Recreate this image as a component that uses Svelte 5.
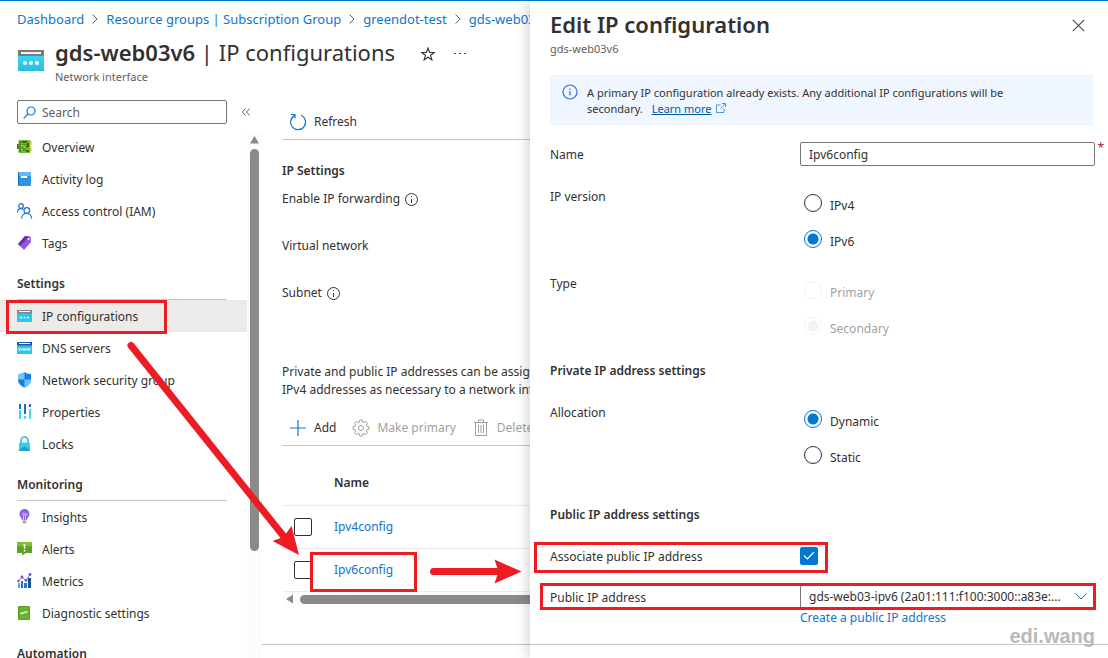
<script>
  let ipVersion = $state('IPv6');
  let kind = $state('Secondary');
  let allocation = $state('Dynamic');
  let associate = $state(true);
  let name = $state('Ipv6config');

  const crumbs = ['Dashboard', 'Resource groups | Subscription Group', 'greendot-test', 'gds-web03v6'];
  const groups = [
    { title: '', items: [['Overview', 'overview'], ['Activity log', 'log'], ['Access control (IAM)', 'iam'], ['Tags', 'tag']] },
    { title: 'Settings', items: [['IP configurations', 'ip'], ['DNS servers', 'dns'], ['Network security group', 'shield'], ['Properties', 'props'], ['Locks', 'lock']] },
    { title: 'Monitoring', items: [['Insights', 'bulb'], ['Alerts', 'alert'], ['Metrics', 'metrics'], ['Diagnostic settings', 'diag']] },
    { title: 'Automation', items: [] }
  ];
  const configs = ['Ipv4config', 'Ipv6config'];
</script>

{#snippet navIcon(id)}
  <svg class="nav-icon" viewBox="0 0 16 16" width="16" height="16" aria-hidden="true">
    {#if id === 'overview'}
      <path fill="#555" d="M0 5h2v5H0z" /><rect x="1.500" y="1" width="12" height="13" rx="1" fill="#76bc2d" />
      <path fill="#2f6b12" d="M5 2h5v2H5zM10 4h2v4h-2zM9 11h3v2H9z" /><path fill="#4d9420" d="M2 2h2v11H2zM5 5h5v7H5z" /><path fill="#c9f08a" d="M5 6h1.500v1H5zM8 6h1v1H8zM6.500 7.500H8V9H6.500zM5 10h1v1H5zM8.500 9.500h1v1h-1z" />
      <path fill="#ffd23c" d="M13 2h2v4h-2zM13 8h2v4h-2z" />
    {:else if id === 'log'}
      <rect x="1" y="1" width="3" height="14" rx="1" fill="#1066b5" /><rect x="2" y="1" width="12" height="14" rx="1" fill="#2f93e3" />
      <path fill="#64b7f3" d="M2 1h12v4H2z" /><rect x="4" y="5" width="6" height="2" fill="#fff" />
    {:else if id === 'iam'}
      <g fill="none" stroke="#1b6ed2" stroke-width="1.200"><circle cx="4" cy="3" r="2.300" /><path d="M.6 9.500C.6 7 2 5.700 4 5.700c1.200 0 2 .4 2.600 1" /><circle cx="9.800" cy="7.500" r="2.800" /><path d="M4.600 15.500c.2-3 2.200-5 5.100-5s4.800 2 5 5" /></g>
    {:else if id === 'tag'}
      <path fill="#8f57d8" d="M8 1l5.500.5L14 7l-7 8-6-6z" /><path fill="#6a2fb5" d="M8 1L1 9l2 2L12 2z" /><circle cx="11.500" cy="4" r="1" fill="#fff" />
    {:else if id === 'ip' || id === 'dns'}
      <rect x="0" y="2" width="15" height="12" rx=".5" fill="#2fc6e8" /><path d="M0 2h15v3.500H0z" fill={id === 'ip' ? '#858585' : '#125ea8'} />
      <path fill="#fff" d="M2 3h11v1H2z" />
      {#if id === 'ip'}<circle cx="4" cy="9.500" r="1" fill="#fff" /><circle cx="7.500" cy="9.500" r="1" fill="#fff" /><circle cx="11" cy="9.500" r="1" fill="#fff" />
      {:else}<path fill="none" stroke="#fff" stroke-width=".8" d="M1.500 8l1 2.500 1-2 1 2 1-2.500M6 8l.8 2.500.8-2 .8 2 .8-2.500M9.800 8l.9 2.500.9-2 .9 2 .9-2.500" />{/if}
    {:else if id === 'shield'}
      <path fill="#1a7fdb" d="M7.500 0c2 1.500 4 2 6.500 2v5.500c0 4-3 6.500-6.500 8C4 14 1 11.500 1 7.500V2c2.500 0 4.500-.5 6.500-2z" />
      <path fill="#6cc6fb" d="M7.500 0v7.500H1V2c2.500 0 4.500-.5 6.500-2zM7.500 7.500H14c0 4-3 6.500-6.500 8z" />
    {:else if id === 'props'}
      <path fill="#1570c4" d="M2 0h2v5H2zM7 0h2v10H7zM12 0h2v3h-2z" /><path fill="#4fd0ee" d="M2 6h2v9H2zM7 12h2v3H7zM12 5h2v10h-2z" />
    {:else if id === 'lock'}
      <path fill="none" stroke="#2cb9dc" stroke-width="1.600" d="M4 7V4.500a3.500 3.500 0 017 0V7" /><rect x="2" y="6.500" width="11" height="8.500" rx="1" fill="#3ccbea" /><path fill="#1fa3cf" d="M2 14l5.500-4 5.500 4v1H2z" />
    {:else if id === 'bulb'}
      <path fill="#8c5ce6" d="M7.500 0a5 5 0 015 5c0 2.600-2.300 3.600-2.500 6H5c-.2-2.400-2.500-3.400-2.500-6a5 5 0 015-5z" />
      <path fill="none" stroke="#dccbff" stroke-width=".9" d="M6.500 11V6M8.500 11V6M6.500 6a1 1 0 10-1-1c0 .6.500 1 1 1h2a1 1 0 10 0-1.500" /><path fill="#a5a5a5" d="M5.500 11.500h4V13l-1 1.500h-2l-1-1.500z" />
    {:else if id === 'alert'}
      <path fill="#5ea324" d="M0 1h15v11H9l-4 2.500V12H0z" /><path fill="#7cc436" d="M0 1h15v4H0z" /><path fill="#fff" d="M6.500 3h2l-.4 5H7zM6.800 9h1.500v1.500H6.800z" />
    {:else if id === 'metrics'}
      <path fill="#5ca8ea" d="M1 10h2v5H1z" /><path fill="#1a78ce" d="M4 8h2v7H4zM7 10h3v5H7z" /><path fill="#135590" d="M11 5h3v10h-3z" />
      <path fill="none" stroke="#9a62e8" stroke-width="1" d="M1.500 8l3.500-4 4 3.500L13 1.500" /><g fill="#8146d8"><circle cx="1.500" cy="8" r="1.200" /><circle cx="5" cy="4" r="1.400" /><circle cx="9" cy="7.300" r="1.400" /><circle cx="13" cy="1.500" r="1.400" /></g>
    {:else}
      <rect x="1" y="1" width="12" height="14" rx="1" fill="#5a9f24" /><rect x="2.500" y="2" width="9.500" height="12" fill="#6cb42e" /><path fill="none" stroke="#fff" stroke-width="1" d="M3 9l2.500-1.500v1.500L8 6.500V8l2.500-1.500" />
    {/if}
  </svg>
{/snippet}

{#snippet info()}
  <svg class="info-icon" width="13" height="13" viewBox="0 0 13 13" aria-hidden="true"><circle cx="6.500" cy="6.500" r="6" fill="none" stroke="#323130" /><path stroke="#323130" d="M6.500 6v4M6.500 3v1" /></svg>
{/snippet}

<div class="portal">
  <main class="blade">
    <nav class="crumbs" aria-label="Breadcrumb">
      {#each crumbs as crumb, i}
        {#if i}<svg width="6" height="10" viewBox="0 0 6 10" aria-hidden="true"><path d="M.5.5L5 5 .5 9.500" fill="none" stroke="#605e5c" /></svg>{/if}
        <a href="#top">{crumb}</a>
      {/each}
    </nav>

    <header class="title">
      <svg width="28" height="22" viewBox="0 0 28 22" aria-hidden="true">
        <defs><linearGradient id="sky" x2="0" y2="1"><stop stop-color="#35d8f5" /><stop offset="1" stop-color="#2cb9e0" /></linearGradient></defs>
        <path fill="url(#sky)" d="M1 6h26v15H1z" /><path fill="#7b7b7b" d="M1 0h26v6H1z" /><path fill="#f2f2f2" d="M4 2h20v2H4z" />
        <g fill="#fff"><circle cx="8" cy="13" r="2" /><circle cx="14" cy="13" r="2" /><circle cx="20" cy="13" r="2" /></g>
      </svg>
      <div>
        <h1><b>gds-web03v6</b> | IP configurations</h1>
        <p>Network interface</p>
      </div>
      <button class="icon-btn" aria-label="Favorite"><svg width="14" height="14" viewBox="0 0 14 14"><path d="M7 1l1.600 4.400 4.700.1-3.800 2.800 1.400 4.600L7 10.200l-3.900 2.700 1.400-4.600L.7 5.500l4.700-.1z" fill="none" stroke="#323130" stroke-width="1.100" /></svg></button>
      <button class="icon-btn" aria-label="More"><svg width="12" height="14" viewBox="0 0 12 14"><path fill="#484644" d="M0 6h2v1H0zM5 6h2v1H5zM10 6h2v1h-2z" /></svg></button>
    </header>

    <div class="body">
      <aside>
        <div class="search-row">
          <label class="search">
            <svg width="13" height="13" viewBox="0 0 13 13" aria-hidden="true"><g fill="none" stroke="#1575cf" stroke-width="1.200"><circle cx="8" cy="5" r="4" /><path d="M5 8L.7 12.300" /></g></svg>
            <input type="search" placeholder="Search" aria-label="Search" />
          </label>
          <button class="icon-btn" aria-label="Collapse menu"><svg width="8" height="8" viewBox="0 0 8 8"><path d="M3.500.5L.5 4l3 3.500M7.500.5l-3 3.500 3 3.500" fill="none" stroke="#605e5c" /></svg></button>
        </div>
        <div class="menu">
          <nav aria-label="Resource menu">
            {#each groups as group}
              {#if group.title}<h2>{group.title}</h2>{/if}
              {#each group.items as [label, icon]}
                <a class="item" class:selected={icon === 'ip'} href="#{icon}">
                  {@render navIcon(icon)}<span>{label}</span>
                  {#if icon === 'ip'}<i class="mark nav-mark"></i>{/if}
                </a>
              {/each}
            {/each}
          </nav>
          <div class="vbar" aria-hidden="true"><svg width="9" height="8" viewBox="0 0 9 8"><path d="M4.500 0L9 7.500H0z" fill="#8a8a8a" /></svg><div class="thumb"></div></div>
        </div>
      </aside>

      <section class="content">
        <div class="inner">
          <div class="toolbar refresh">
            <button><svg width="18" height="18" viewBox="0 0 18 18" aria-hidden="true"><path d="M12 2.300a7.500 7.500 0 11-6.500.3M2 1.500h4v4" fill="none" stroke="#1575cf" stroke-width="1.200" /></svg>Refresh</button>
          </div>
          <h3>IP Settings</h3>
          <div class="prop first">Enable IP forwarding {@render info()}</div>
          <div class="prop">Virtual network</div>
          <div class="prop">Subnet {@render info()}</div>
          <p class="desc">Private and public IP addresses can be assigned<br />IPv4 addresses as necessary to a network interface</p>
          <div class="toolbar">
            <button><svg width="18" height="18" viewBox="0 0 18 18" aria-hidden="true"><path d="M9 1v16M1 9h16" stroke="#1575cf" stroke-width="1.200" /></svg>Add</button>
            <button disabled><svg width="18" height="18" viewBox="0 0 18 18" aria-hidden="true"><g fill="none" stroke="#a19f9d"><path d="M7.700 1h2.600l.4 2 1.300.6L13.700 2.500l1.800 1.800-1.100 1.700.6 1.300 2 .4v2.600l-2 .4-.6 1.300 1.100 1.700-1.800 1.800-1.700-1.100-1.300.6-.4 2H7.700l-.4-2-1.300-.6-1.700 1.100-1.800-1.800L3.600 12 3 10.700l-2-.4V7.700l2-.4L3.600 6 2.500 4.300l1.800-1.800L6 3.600 7.300 3z" /><circle cx="9" cy="9" r="2.500" /></g></svg>Make primary</button>
            <button disabled><svg width="18" height="18" viewBox="0 0 18 18" aria-hidden="true"><path d="M2 3.500h14M6.500 3V1h5v2M3.500 3.500v13h11v-13M6.500 6v8M9 6v8M11.500 6v8" fill="none" stroke="#a19f9d" /></svg>Delete</button>
          </div>
          <table>
            <thead><tr><th class="tick"></th><th>Name</th></tr></thead>
            <tbody>
              {#each configs as config}
                <tr>
                  <td class="tick"><input type="checkbox" aria-label="Select {config}" /></td>
                  <td><a href="#{config}">{config}</a>{#if config === 'Ipv6config'}<i class="mark row-mark"></i>{/if}</td>
                </tr>
              {/each}
            </tbody>
          </table>
          <div class="hbar" aria-hidden="true"><svg width="8" height="10" viewBox="0 0 8 10"><path d="M0 5l7-4.500v9z" fill="#8a8a8a" /></svg><div class="thumb"></div></div>
        </div>
        <footer></footer>
      </section>
    </div>

    <svg class="arrows" width="530" height="657" viewBox="0 1 530 657" aria-hidden="true">
      <g stroke="#ed1c24" stroke-width="7" stroke-linecap="round"><path d="M131 345.500L285 538" /><path d="M433.500 571.500H498" /></g>
      <path fill="#ed1c24" d="M299 555l-26.500-14 11-4 8-11zM521.500 571.500l-27 12 4-12-4-12z" />
    </svg>
  </main>

  <section class="panel" aria-label="Edit IP configuration">
    <header>
      <div><h2>Edit IP configuration</h2><p>gds-web03v6</p></div>
      <button class="icon-btn" aria-label="Close"><svg width="13" height="13" viewBox="0 0 13 13"><path d="M.8.8l11.400 11.400M12.200.8L.8 12.200" stroke="#484644" stroke-width="1.100" /></svg></button>
    </header>
    <div class="notice">
      <svg width="16" height="16" viewBox="0 0 16 16" aria-hidden="true"><circle cx="8" cy="8" r="7" fill="none" stroke="#2b6cf0" stroke-width="1.200" /><path stroke="#2b6cf0" stroke-width="1.200" d="M8 7v4.500M8 4.500V6" /></svg>
      <p>A primary IP configuration already exists. Any additional IP configurations will be<br />secondary. <a href="#learn">Learn more</a><svg width="10" height="10" viewBox="0 0 10 10" aria-hidden="true"><path d="M4.500 2H.5v7.500H8V5.500M6 .5h3.500V4M9.500.5L4.500 5.500" fill="none" stroke="#4a9be0" /></svg></p>
    </div>
    <form>
      <div class="row"><label for="cfg">Name</label><div class="field"><input id="cfg" class="text" bind:value={name} required /><span class="star">*</span></div></div>
      <div class="row version" role="radiogroup" aria-labelledby="ver"><span id="ver">IP version</span>
        <div class="radios">
          {#each ['IPv4', 'IPv6'] as v}<label><input type="radio" name="version" value={v} bind:group={ipVersion} /><span>{v}</span></label>{/each}
        </div>
      </div>
      <div class="row kind" role="radiogroup" aria-labelledby="kind"><span id="kind">Type</span>
        <div class="radios">
          {#each ['Primary', 'Secondary'] as v}<label class="off"><input type="radio" name="kind" value={v} bind:group={kind} disabled /><span>{v}</span></label>{/each}
        </div>
      </div>
      <h3 class="private">Private IP address settings</h3>
      <div class="row alloc" role="radiogroup" aria-labelledby="alloc"><span id="alloc">Allocation</span>
        <div class="radios">
          {#each ['Dynamic', 'Static'] as v}<label><input type="radio" name="alloc" value={v} bind:group={allocation} /><span>{v}</span></label>{/each}
        </div>
      </div>
      <h3 class="public">Public IP address settings</h3>
      <div class="row assoc"><label for="assoc">Associate public IP address</label>
        <div class="check"><input id="assoc" type="checkbox" bind:checked={associate} /><svg width="12" height="9" viewBox="0 0 12 9" aria-hidden="true"><path d="M1 4.500l3.300 3.300L11 1" fill="none" stroke="#fff" stroke-width="1.200" /></svg></div>
        <i class="mark assoc-mark"></i>
      </div>
      <div class="row pip"><label for="pip">Public IP address</label>
        <div class="field"><select id="pip"><option>gds-web03-ipv6 (2a01:111:f100:3000::a83e:...</option></select><svg class="chev" width="12" height="7" viewBox="0 0 12 7" aria-hidden="true"><path d="M.5.5L6 6l5.500-5.500" fill="none" stroke="#1f6fb8" /></svg></div>
        <i class="mark pip-mark"></i>
      </div>
      <div class="row"><a class="create" href="#create">Create a public IP address</a></div>
    </form>
    <footer><span>edi.wang</span></footer>
  </section>
</div>

<style>
  :global(body) { margin: 0; background: #fff; }
  .portal {
    display: grid; grid-template-columns: minmax(0, 530fr) minmax(0, 578fr);
    height: 100vh; box-sizing: border-box; border-top: 1px solid #0078d4; overflow: hidden;
    font: 12px/20px "Noto Sans", "Open Sans", sans-serif; color: #323130;
  }
  .portal * { box-sizing: border-box; }
  h1, h2, h3, p { margin: 0; font-weight: 400; }
  h2, h3, th { font-size: 12px; font-weight: 600; }
  a { color: #0f74cd; text-decoration: none; }
  button, input, select { font: inherit; color: inherit; }
  button { border: 0; background: none; padding: 0; }
  svg { flex: none; display: block; }
  .icon-btn { display: flex; }
  .mark { position: absolute; border: 3px solid #ed1c24; pointer-events: none; }

  .blade { position: relative; display: flex; flex-direction: column; min-width: 0; overflow: hidden; white-space: nowrap; }
  .crumbs { display: flex; align-items: center; gap: 8px; padding: 8px 0 0 17px; font-size: 13px; }
  .title { display: flex; padding: 6px 0 0 17px; height: 71px; }
  .title > svg { margin-top: 15px; }
  .title > div { margin: 0 26px 0 10px; }
  h1 { font-size: 22px; line-height: 34px; }
  h1 b { font-weight: 600; }
  .title p, .panel header p { font-size: 11px; line-height: 14px; color: #605e5c; }
  .title p { margin-top: 1px; }
  .title .icon-btn { margin: 12px 19px 0 0; height: 14px; }
  .body { display: flex; flex: 1; min-height: 0; }
  aside { width: 262px; flex: none; display: flex; flex-direction: column; }
  .search-row { display: flex; align-items: center; gap: 15px; padding-left: 17px; height: 24px; margin-bottom: 7px; }
  .search { display: flex; align-items: center; gap: 6px; width: 210px; height: 24px; padding-left: 5px; border: 1px solid #797775; border-radius: 2px; }
  .search input { flex: 1; min-width: 0; border: 0; outline: 0; padding: 1px 0 0; background: none; }
  .search input::placeholder { color: #605e5c; opacity: 1; }
  .menu { display: flex; flex: 1; min-height: 0; }
  .menu nav { flex: 1; overflow: hidden; }
  .menu h2 { height: 41px; padding-top: 15px; margin: 0 20px 0 17px; border-bottom: 1px solid #c8c6c4; }
  .item { position: relative; display: flex; align-items: center; gap: 9px; height: 32px; padding: 2px 0 0 17px; color: #323130; }
  .selected { background: #edebe9; }
  .nav-icon { margin-top: -2px; }
  .nav-mark { left: 6px; top: 0; width: 161px; height: 34px; z-index: 1; }
  .vbar { width: 15px; background: #fcfcfc; padding: 5px 3px 0; }
  .vbar .thumb { width: 9px; height: 402px; margin-top: 5px; border-radius: 5px; background: #8a8a8a; }

  .content { flex: 1; min-width: 0; display: flex; flex-direction: column; }
  .inner { padding-left: 20px; }
  .toolbar { display: flex; align-items: center; gap: 16px; height: 36px; padding-left: 7px; border-bottom: 1px solid #c8c6c4; }
  .toolbar button { display: flex; align-items: center; gap: 7px; }
  .toolbar button:disabled { color: #a19f9d; }
  .refresh { height: 40px; padding-top: 4px; }
  .inner h3 { margin-top: 21px; }
  .prop { display: flex; align-items: center; gap: 5px; height: 20px; margin-top: 27px; }
  .first { margin-top: 8px; }
  .desc { margin: 60px 0 11px; line-height: 18px; }
  table { width: 100%; border-collapse: collapse; }
  th, td { position: relative; height: 43px; padding: 0; text-align: left; border-bottom: 1px solid #edebe9; }
  th { height: 59px; padding-top: 16px; }
  .tick { width: 52px; padding-left: 12px; }
  input[type='checkbox'] { appearance: none; display: block; width: 18px; height: 18px; margin: 0; border: 1px solid #323130; border-radius: 2px; }
  .row-mark { left: -24px; top: 3px; width: 107px; height: 40px; }
  .hbar { display: flex; align-items: center; gap: 6px; height: 15px; padding-left: 4px; background: #fcfcfc; }
  .hbar .thumb { flex: 1; height: 9px; border-radius: 5px 0 0 5px; background: #8a8a8a; }
  footer { height: 14px; margin-top: auto; flex: none; border-top: 1px solid #c8c6c4; }
  .arrows { position: absolute; left: 0; top: 0; pointer-events: none; }

  .panel { position: relative; display: flex; flex-direction: column; background: #fff; box-shadow: 0 0 14px rgba(0, 0, 0, 0.24); }
  .panel header { display: flex; justify-content: space-between; height: 74px; padding: 6px 23px 0 20px; }
  .panel header h2 { font-size: 22px; line-height: 34px; }
  .panel header .icon-btn { margin-top: 12px; height: 13px; }
  .panel header p { margin-top: 1px; }
  .notice { display: flex; gap: 9px; height: 50px; margin: 0 15px 0 20px; padding: 9px 12px; background: #eff6ff; font-size: 11px; line-height: 16px; }
  .notice a { margin: 0 5px 0 6px; color: #005a9e; text-decoration: underline; }
  .notice p { padding-top: 1px; }
  .notice p svg { display: inline-block; }
  form { padding: 17px 13px 0 20px; }
  .row { position: relative; display: grid; grid-template-columns: 250px minmax(0, 1fr); }
  .field { position: relative; height: 24px; }
  .row > label, .row > span { padding-top: 1px; align-self: start; }
  .row > label[for='cfg'], .row > label[for='pip'] { align-self: center; }
  form h3 { padding-top: 1px; height: 20px; }
  .text, select { display: block; width: 100%; height: 24px; padding: 0 8px; border: 1px solid #797775; border-radius: 2px; background: #fff; outline: 0; }
  select { appearance: none; }
  .chev { position: absolute; right: 8px; top: 8px; }
  .star { position: absolute; right: -9px; top: -4px; color: #a4262c; }
  .version { margin-top: 20px; }
  .kind, .private { margin-top: 25px; }
  .alloc { margin-top: 22px; }
  .public { margin-top: 40px; }
  .assoc { margin-top: 22px; height: 20px; }
  .pip { margin-top: 19px; }
  .radios { display: grid; gap: 18px; padding: 8px 0 0 4px; }
  .radios label { display: flex; gap: 8px; height: 18px; }
  .radios span { padding-top: 2px; }
  .off { color: #a19f9d; }
  input[type='radio'] { appearance: none; width: 18px; height: 18px; margin: 0; border: 1px solid #323130; border-radius: 50%; }
  input[type='radio']:checked { border-color: #0078d4; background: radial-gradient(circle, #0078d4 5px, transparent 6px); }
  input[type='radio']:disabled { border-color: #f3f2f1; }
  input[type='radio']:disabled:checked { background: radial-gradient(circle, #f3f2f1 5px, transparent 6px); }
  .check { position: relative; height: 20px; padding-top: 1px; }
  .check input:checked { background: #0078d4; border-color: #0078d4; }
  .check svg { position: absolute; left: 3px; top: 5px; pointer-events: none; }
  .assoc-mark { left: -16px; top: -4px; width: 294px; height: 31px; }
  .pip-mark { left: -10px; right: -1px; top: -2px; bottom: -1px; }
  .create { grid-column: 2; line-height: 16px; padding-top: 1px; }
  .panel footer { position: relative; }
  .panel footer span { position: absolute; right: 13px; bottom: 11px; font: bold 20px/22px "Liberation Sans", Arial, sans-serif; color: #b9b9b9; }
</style>
